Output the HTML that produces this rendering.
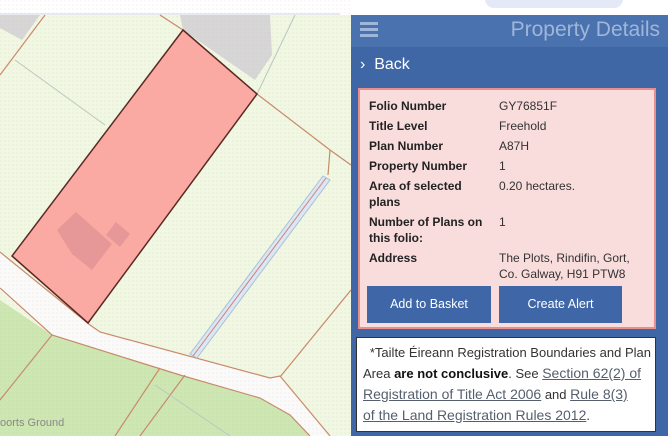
<!DOCTYPE html>
<html><head><meta charset="utf-8"><style>
*{margin:0;padding:0;box-sizing:border-box}
body{width:668px;height:436px;overflow:hidden;background:#fff;font-family:"Liberation Sans","DejaVu Sans",sans-serif;position:relative}
.map{position:absolute;left:0;top:0}
.pill{position:absolute;left:485px;top:-10px;width:138px;height:18px;border-radius:9px;background:#e3e9f6}
.panel{position:absolute;left:351px;top:15px;width:317px;height:421px;background:#3f67a6}
.hdr{height:32px;background:#4a72ae;position:relative}
.hdr .t{position:absolute;right:8px;top:3px;font-size:21px;color:#9fb6da}
.ham{position:absolute;left:9px;top:7px;width:18px}
.ham i{display:block;height:3px;background:#9fb6da;margin-bottom:3px}
.back{height:38px;color:#fff;font-size:16px;padding:9px 0 0 9px}
.box{position:absolute;left:7px;top:73px;width:298px;height:241px;background:#f9dcdc;border:2px solid #e88e8e}
.row{position:absolute;left:9px;font-size:12px;color:#222;line-height:16px}
.row b{position:absolute;left:0;width:130px;font-weight:bold}
.row span{position:absolute;left:130px;width:160px;color:#333}
.btn{position:absolute;top:196px;height:37px;background:#3f67a8;color:#fff;font-size:12.5px;text-align:center;line-height:37px}
.note{position:absolute;left:5px;top:322px;width:300px;height:95px;background:#fff;border:1px solid #333;font-size:13px;color:#333;padding:5px 4px 0 6px;line-height:20px;text-align:right}
.note a{color:#555f6e;text-decoration:underline;font-size:14px}
</style></head><body>
<svg class="map" width="351" height="436" viewBox="0 0 351 436">
<defs><pattern id="d" width="4" height="4" patternUnits="userSpaceOnUse"><circle cx="1" cy="1" r=".5" fill="#d8b8a8"/></pattern></defs>
<rect width="351" height="436" fill="#f0f7e2"/>
<rect y="0" width="351" height="15" fill="#fff"/>
<rect x="0" y="13" width="340" height="2" fill="#e6eaf2"/>
<polygon points="0,300 52,335 180,375 260,398 290,415 310,436 0,436" fill="#cde7b2"/>
<polygon points="0,252 90,325 100,332 270,378 280,376 300,400 330,436 310,436 290,415 260,398 180,375 52,335 0,290" fill="#fafafa"/>
<polygon points="180,15 270,15 272,55 255,80 183,30" fill="#d6d6d6"/>
<polygon points="0,15 40,15 22,40 0,28" fill="#d6d6d6"/>
<rect width="351" height="436" fill="url(#d)" opacity=".5"/>
<g fill="none" stroke="#c98a6a" stroke-width="1.2">
<polyline points="0,252 90,325 100,332 270,378 280,376 300,400 330,436"/>
<polyline points="0,288 52,335 180,375 260,398 290,415 310,436"/>
<line x1="52" y1="335" x2="0" y2="400"/>
<line x1="160" y1="368" x2="115" y2="436"/>
<line x1="185" y1="375" x2="140" y2="436"/>
<polyline points="257,94 330,150 351,165"/>
<polyline points="330,150 328,175"/>
<line x1="280" y1="377" x2="351" y2="290"/>
<line x1="45" y1="15" x2="0" y2="75"/>
<line x1="160" y1="15" x2="183" y2="30"/>
</g>
<g fill="none" stroke="#b8c8c0" stroke-width="1">
<line x1="15" y1="60" x2="105" y2="125"/>
<line x1="295" y1="15" x2="257" y2="94"/>
<line x1="155" y1="385" x2="230" y2="436"/>
</g>
<polygon points="323,176 330,180 197,358 190,354" fill="#dbe7f2" stroke="#a8c0d8"/>
<line x1="326" y1="178" x2="193" y2="356" stroke="#d08080"/>
<polygon points="183,30 257,94 88,323 12,256" fill="#fbaaa3" stroke="#5a2a22" stroke-width="1.5"/>
<polygon points="76,212 112,244 92,270 72,254 57,230" fill="#e69898"/>
<polygon points="116,222 130,234 120,247 106,235" fill="#e69898"/>
<text x="0" y="426" font-size="11" fill="#888">oorts Ground</text>
</svg>
<div class="pill"></div>
<div class="panel">
<div class="hdr"><div class="ham"><i></i><i></i><i></i></div><div class="t">Property Details</div></div>
<div class="back">›&nbsp; Back</div>
<div class="box">
<div class="row" style="top:8px"><b>Folio Number</b><span>GY76851F</span></div>
<div class="row" style="top:28px"><b>Title Level</b><span>Freehold</span></div>
<div class="row" style="top:48px"><b>Plan Number</b><span>A87H</span></div>
<div class="row" style="top:68px"><b>Property Number</b><span>1</span></div>
<div class="row" style="top:88px"><b>Area of selected<br>plans</b><span>0.20 hectares.</span></div>
<div class="row" style="top:124px"><b>Number of Plans on<br>this folio:</b><span>1</span></div>
<div class="row" style="top:160px"><b>Address</b><span>The Plots, Rindifin, Gort,<br>Co. Galway, H91 PTW8</span></div>
<div class="btn" style="left:7px;width:124px">Add to Basket</div>
<div class="btn" style="left:139px;width:123px">Create Alert</div>
</div>
<div class="note">*Tailte Éireann Registration Boundaries and Plan<br><span style="float:left">Area <b style="color:#111">are not conclusive</b>. See <a>Section 62(2) of</a></span><br><span style="float:left"><a>Registration of Title Act 2006</a> and <a>Rule 8(3)</a></span><br><span style="float:left"><a>of the Land Registration Rules 2012</a>.</span></div>
</div>
</body></html>
